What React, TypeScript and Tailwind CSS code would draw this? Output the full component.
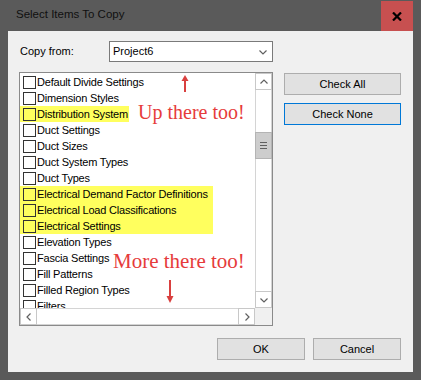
import React from 'react';

type Row = { label: string; hl?: string };

const ROWS: Row[] = [
  { label: 'Default Divide Settings' },
  { label: 'Dimension Styles' },
  { label: 'Distribution System', hl: 'w-[109px]' },
  { label: 'Duct Settings' },
  { label: 'Duct Sizes' },
  { label: 'Duct System Types' },
  { label: 'Duct Types' },
  { label: 'Electrical Demand Factor Definitions', hl: 'w-[193px]' },
  { label: 'Electrical Load Classifications', hl: 'w-[193px]' },
  { label: 'Electrical Settings', hl: 'w-[193px]' },
  { label: 'Elevation Types' },
  { label: 'Fascia Settings' },
  { label: 'Fill Patterns' },
  { label: 'Filled Region Types' },
  { label: 'Filters' },
];

const Chevron = ({ dir }: { dir: 'up' | 'down' | 'left' | 'right' }) => {
  const d = {
    up: 'M1.5 5.5 L5 2 L8.5 5.5',
    down: 'M1.5 2.5 L5 6 L8.5 2.5',
    left: 'M5.5 1.5 L2 5 L5.5 8.5',
    right: 'M2.5 1.5 L6 5 L2.5 8.5',
  }[dir];
  const w = dir === 'up' || dir === 'down' ? 10 : 8;
  const h = dir === 'up' || dir === 'down' ? 8 : 10;
  return (
    <svg width={w} height={h} viewBox={`0 0 ${w} ${h}`}>
      <path d={d} fill="none" stroke="#606060" strokeWidth="1.2" />
    </svg>
  );
};

const WinButton = ({ label, focused }: { label: string; focused?: boolean }) => (
  <button
    className={`h-[22px] flex items-center justify-center bg-[#e1e1e1] text-[11px] text-black border ${
      focused ? 'border-[#0078d7]' : 'border-[#adadad]'
    }`}
  >
    {label}
  </button>
);

export default function App() {
  return (
    <div
      className="w-[421px] h-[380px] bg-[#5a5a5a] flex flex-col overflow-hidden"
      style={{ fontFamily: '"Liberation Sans", Arial, sans-serif' }}
    >
      {/* Title bar */}
      <div className="h-[31px] flex shrink-0">
        <div className="flex-1 flex items-center pl-4 text-[11.5px] text-[#101010] pb-px">Select Items To Copy</div>
        <div className="w-[32px] h-[30px] mt-px bg-[#c75050] flex items-center justify-center mr-2">
          <svg width="10" height="9" viewBox="0 0 10 9">
            <path d="M1 0.5 L9 8.5 M9 0.5 L1 8.5" stroke="#000000" strokeWidth="2.2" />
          </svg>
        </div>
      </div>

      {/* Client area */}
      <div className="flex-1 mx-2 mb-2 bg-[#f0f0f0] flex flex-col pl-[11px] pr-3 pt-[10px] text-black text-[11px]">
        {/* Copy from */}
        <div className="flex items-center h-[21px]">
          <span className="ml-px w-[89px]">Copy from:</span>
          <div className="w-[164px] h-[21px] border border-[#7a7a7a] bg-white flex items-center justify-between pl-[3px] pr-[4px]">
            <span>Project6</span>
            <Chevron dir="down" />
          </div>
        </div>

        {/* List + side buttons */}
        <div className="flex mt-[10px] gap-[11px]">
          <div className="relative w-[254px] h-[254px] border border-[#8a8a8a] bg-white flex flex-col">
            <div className="flex flex-1 min-h-0">
              <div className="flex-1 overflow-hidden pt-px">
                {ROWS.map((r) => (
                  <div key={r.label} className="relative h-4 flex items-center">
                    {r.hl && <div className={`absolute left-0 top-0 h-4 bg-[#ffff5e] ${r.hl}`} />}
                    <div className="relative ml-[3px] w-[13px] h-[13px] border border-[#333]" />
                    <span className="relative ml-px whitespace-nowrap leading-none tracking-[-0.2px]">{r.label}</span>
                  </div>
                ))}
              </div>
              {/* vertical scrollbar */}
              <div className="w-[17px] flex flex-col border-l border-r border-[#d4d4d4] bg-white">
                <div className="h-[17px] border border-[#c8c8c8] -mx-px flex items-center justify-center">
                  <Chevron dir="up" />
                </div>
                <div className="h-[42px]" />
                <div className="h-[27px] -mx-px bg-[#cdcdcd] border border-[#b4b4b4] flex flex-col items-center justify-center gap-[2px]">
                  <div className="w-[7px] h-px bg-[#606060]" />
                  <div className="w-[7px] h-px bg-[#606060]" />
                  <div className="w-[7px] h-px bg-[#606060]" />
                </div>
                <div className="flex-1" />
                <div className="h-[17px] border border-[#c8c8c8] -mx-px flex items-center justify-center">
                  <Chevron dir="down" />
                </div>
              </div>
            </div>
            {/* horizontal scrollbar */}
            <div className="h-[17px] flex shrink-0">
              <div className="flex-1 flex border-t border-b border-[#d4d4d4] bg-white">
                <div className="w-[17px] border border-[#c8c8c8] -my-px flex items-center justify-center">
                  <Chevron dir="left" />
                </div>
                <div className="flex-1" />
                <div className="w-[17px] border border-[#c8c8c8] -my-px flex items-center justify-center">
                  <Chevron dir="right" />
                </div>
              </div>
              <div className="w-[17px] bg-[#f0f0f0]" />
            </div>

            {/* annotations */}
            <svg className="absolute left-[161px] top-[2px]" width="8" height="18" viewBox="0 0 8 18">
              <path d="M4 17 V5" stroke="#d9403f" strokeWidth="2" />
              <path d="M0.5 6 L4 0 L7.5 6 Z" fill="#d9403f" />
            </svg>
            <span
              className="absolute left-[118px] top-[29px] text-[20px] leading-none text-[#e63b3b] whitespace-nowrap"
              style={{ fontFamily: '"Liberation Serif", "Times New Roman", serif' }}
            >
              Up there too!
            </span>
            <span
              className="absolute left-[93px] top-[178px] text-[21px] leading-none text-[#e63b3b] whitespace-nowrap"
              style={{ fontFamily: '"Liberation Serif", "Times New Roman", serif' }}
            >
              More there too!
            </span>
            <svg className="absolute left-[146px] top-[207px]" width="8" height="24" viewBox="0 0 8 24">
              <path d="M4 0 V17" stroke="#d9403f" strokeWidth="2" />
              <path d="M0.5 16 L4 23 L7.5 16 Z" fill="#d9403f" />
            </svg>
          </div>

          <div className="w-[117px] flex flex-col gap-[8px] mt-px">
            <WinButton label="Check All" />
            <WinButton label="Check None" focused />
          </div>
        </div>

        {/* Bottom buttons */}
        <div className="flex justify-end gap-[8px] mt-[12px]">
          <div className="w-[88px] flex flex-col">
            <WinButton label="OK" />
          </div>
          <div className="w-[88px] flex flex-col">
            <WinButton label="Cancel" />
          </div>
        </div>
      </div>
    </div>
  );
}
